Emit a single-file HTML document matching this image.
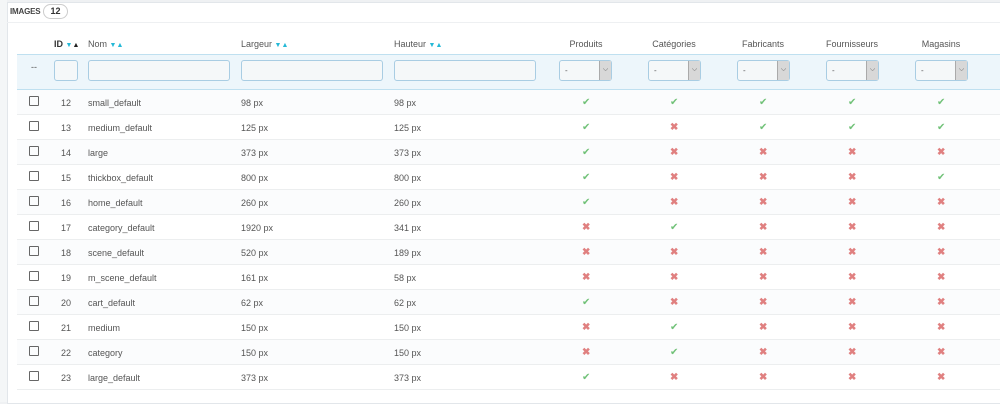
<!DOCTYPE html><html><head><meta charset="utf-8"><style>
body{margin:0;width:1000px;height:402px;background:#eff1f3;font-family:"Liberation Sans",sans-serif;font-size:9px;color:#555;position:relative;overflow:hidden}
.panel{position:absolute;left:7px;top:2px;width:993px;height:400px;background:#fff;border:1px solid #e2e6ea;border-right:none}
.a{position:absolute}
.hd{position:absolute;left:10px;top:7px;font-size:8px;color:#444;font-weight:bold;letter-spacing:-0.2px}
.badge{position:absolute;left:43px;top:4px;width:23px;height:13px;border:1px solid #ccc;border-radius:8px;text-align:center;font-size:9px;font-weight:bold;line-height:13px;color:#333}
.inp{position:absolute;top:60px;height:21px;border:1px solid #a9cde3;border-radius:3px;background:#f5f8f9;box-sizing:border-box}
.sel{position:absolute;top:60px;width:53px;height:21px;border:1px solid #a9cde3;border-radius:3px;background:#f5f8f9;box-sizing:border-box;font-size:8px;padding:5px 5px}
.sel b{position:absolute;right:0;top:0;width:11px;height:19px;background:#d8d8d8;border-left:1px solid #aaa;font-weight:normal;font-size:7px;text-align:center;line-height:18px;color:#555}
.row{position:absolute;left:17px;width:983px;height:25px;border-bottom:1px solid #eceeef;box-sizing:border-box}
.row span{position:absolute;top:8px}
.cb{position:absolute;left:12px;top:6px;width:8px;height:8px;border:1px solid #666;border-radius:1px}
.y{color:#72c279;font-size:10px}.n{color:#e08080;font-size:10px;font-weight:bold}
.ar{color:#25b9d7;font-size:7px}
</style></head><body>
<div class="a" style="left:0;top:0;width:7px;height:402px;background:#f4f6f7"></div>
<div class="panel"></div>
<div class="hd">IMAGES</div><div class="badge">12</div>
<div class="a" style="left:7px;top:22px;width:993px;height:1px;background:#eef0f2"></div>
<div class="a" style="left:54px;top:39px;color:#333;font-weight:bold">ID <span class="ar">▼</span><span style="color:#222;font-size:7px">▲</span></div>
<div class="a" style="left:88px;top:39px">Nom <span class="ar">▼▲</span></div>
<div class="a" style="left:241px;top:39px">Largeur <span class="ar">▼▲</span></div>
<div class="a" style="left:394px;top:39px">Hauteur <span class="ar">▼▲</span></div>
<div class="a" style="left:556px;top:39px;width:60px;text-align:center">Produits</div>
<div class="a" style="left:644px;top:39px;width:60px;text-align:center">Catégories</div>
<div class="a" style="left:733px;top:39px;width:60px;text-align:center">Fabricants</div>
<div class="a" style="left:822px;top:39px;width:60px;text-align:center">Fournisseurs</div>
<div class="a" style="left:911px;top:39px;width:60px;text-align:center">Magasins</div>
<div class="a" style="left:17px;top:54px;width:983px;height:34px;background:#edf6fb;border-top:1px solid #bfe0f0;border-bottom:1px solid #bfe0f0"></div>
<div class="a" style="left:31px;top:62px">--</div>
<div class="inp" style="left:54px;width:24px"></div>
<div class="inp" style="left:88px;width:142px"></div>
<div class="inp" style="left:241px;width:142px"></div>
<div class="inp" style="left:394px;width:142px"></div>
<div class="sel" style="left:559px">-<b>⌵</b></div>
<div class="sel" style="left:648px">-<b>⌵</b></div>
<div class="sel" style="left:737px">-<b>⌵</b></div>
<div class="sel" style="left:826px">-<b>⌵</b></div>
<div class="sel" style="left:915px">-<b>⌵</b></div>
<div id="rows"></div>
<script>
var d=[[12,"small_default","98 px","98 px","YYYYY"],[13,"medium_default","125 px","125 px","YNYYY"],[14,"large","373 px","373 px","YNNNN"],[15,"thickbox_default","800 px","800 px","YNNNY"],[16,"home_default","260 px","260 px","YNNNN"],[17,"category_default","1920 px","341 px","NYNNN"],[18,"scene_default","520 px","189 px","NNNNN"],[19,"m_scene_default","161 px","58 px","NNNNN"],[20,"cart_default","62 px","62 px","YNNNN"],[21,"medium","150 px","150 px","NYNNN"],[22,"category","150 px","150 px","NYNNN"],[23,"large_default","373 px","373 px","YNNNN"]];
var cx=[570,658,747,836,925],h="";
d.forEach(function(r,i){h+='<div class="row" style="top:'+(90+i*25)+'px;background:'+(i%2?'#fff':'#fbfcfd')+'"><div class="cb"></div><span style="left:44px">'+r[0]+'</span><span style="left:71px">'+r[1]+'</span><span style="left:224px">'+r[2]+'</span><span style="left:377px">'+r[3]+'</span>';
for(var k=0;k<5;k++){var y=r[4][k]=="Y";h+='<span class="'+(y?'y':'n')+'" style="left:'+(cx[k]-5)+'px;top:7px">'+(y?'✔':'✖')+'</span>';}h+='</div>';});
document.getElementById('rows').innerHTML=h;
</script>
</body></html>
